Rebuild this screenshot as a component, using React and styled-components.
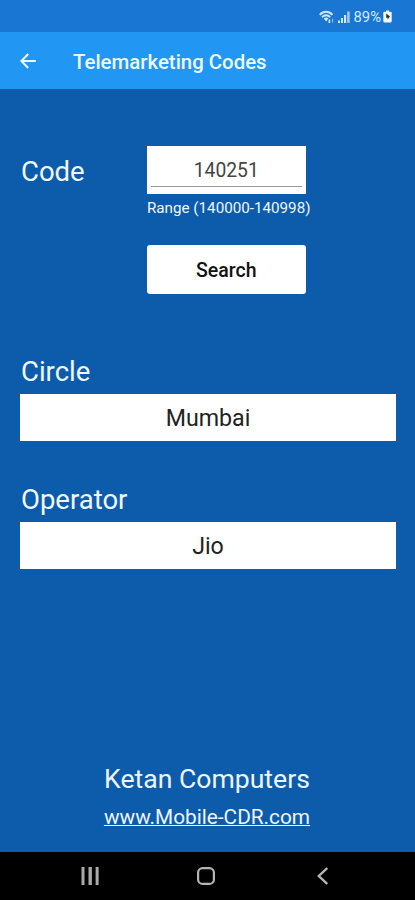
import React from 'react';
import styled, {createGlobalStyle} from 'styled-components';

const App = () => {
  return(
    <Screen>
      <GlobalStyle/>
      <StatusBar>
        <svg width="16" height="14" viewBox="0 0 16 14" fill="none" stroke="#cfe6fb">
          <path d="M0.8 4.8C4.4 0.8 9.8 0.8 13.4 4.8" strokeWidth="2"/>
          <path d="M3 7.2C5.4 4.6 8.8 4.6 11.2 7.2" strokeWidth="1.8"/>
          <path d="M4.8 8.6C6.2 7.2 8 7.2 9.4 8.6L7.1 11.4Z" fill="#cfe6fb" stroke="none"/>
          <path d="M10.4 9.5v3.5" strokeWidth="1.8"/>
          <path d="M13.6 8.5v4" strokeWidth="1.2" opacity="0.6"/>
        </svg>
        <svg width="12" height="12" viewBox="0 0 12 12" fill="#cfe6fb">
          <rect x="0" y="9.5" width="2" height="2.5"/>
          <rect x="3" y="7" width="2" height="5"/>
          <rect x="6" y="4" width="2.2" height="8"/>
          <rect x="9.2" y="0.5" width="2.5" height="11.5" opacity="0.75"/>
        </svg>
        <Percent>89%</Percent>
        <svg width="9" height="13" viewBox="0 0 9 13">
          <path d="M3 0.5h3v1.3h1.5q1.2 0 1.2 1.2v8q0 1.5-1.2 1.5h-6Q0.3 12.5 0.3 11V3q0-1.2 1.2-1.2H3Z" fill="#f2f8f5"/>
          <path d="M3.2 3.5v4.2h1.4v1.8L7 6.4Z" fill="#1d3345"/>
        </svg>
      </StatusBar>
      <AppBar>
        <svg width="16" height="16" viewBox="0 0 16 16" fill="none" stroke="#edf9ff" strokeWidth="2">
          <path d="M15.8 8H1.6M8.2 1 1.4 8l6.8 7"/>
        </svg>
        <Title>Telemarketing Codes</Title>
      </AppBar>
      <Content>
        <CodeRow>
          <CodeLabel htmlFor="code">Code</CodeLabel>
          <CodeColumn>
            <InputBox>
              <CodeInput id="code" defaultValue="140251"/>
            </InputBox>
            <Hint>Range (140000-140998)</Hint>
            <SearchButton>Search</SearchButton>
          </CodeColumn>
        </CodeRow>
        <Field>
          <Label>Circle</Label>
          <Value>Mumbai</Value>
        </Field>
        <Field>
          <Label>Operator</Label>
          <Value>Jio</Value>
        </Field>
        <Footer>
          <Company>Ketan Computers</Company>
          <SiteLink href="#">www.Mobile-CDR.com</SiteLink>
        </Footer>
      </Content>
      <NavBar>
        <svg width="18" height="18" viewBox="0 0 18 18" fill="#a9a9a9">
          <rect x="0.5" y="0" width="3" height="18"/>
          <rect x="7.5" y="0" width="3.4" height="18"/>
          <rect x="14.6" y="0" width="3" height="18"/>
        </svg>
        <svg width="18" height="18" viewBox="0 0 18 18" fill="none" stroke="#b4b4b4" strokeWidth="2.2">
          <rect x="1.1" y="1.1" width="15.8" height="15.8" rx="4.5"/>
        </svg>
        <svg width="11" height="18" viewBox="0 0 11 18" fill="none" stroke="#b4b4b4" strokeWidth="2.4">
          <path d="M10.2 1 1.8 9l8.4 8"/>
        </svg>
      </NavBar>
    </Screen>
  );
}

const GlobalStyle = createGlobalStyle`
  *{
    box-sizing:border-box;
  }
  body{
    margin:0;
    background:#0d5bab;
    font-family:Roboto, sans-serif;
  }
`;

const Screen = styled.div`
  display:flex;
  flex-direction:column;
  width:415px;
  height:900px;
  overflow:hidden;
  background:#0d5bab;
`;

const StatusBar = styled.header`
  display:flex;
  align-items:center;
  justify-content:flex-end;
  height:32px;
  padding:1px 23px 0 0;
  background:#1976d2;
  gap:3px;
`;

const Percent = styled.span`
  margin-left:1px;
  margin-right:-1px;
  color:#d6eafc;
  font-size:14.8px;
  line-height:16px;
`;

const AppBar = styled.nav`
  display:flex;
  align-items:center;
  height:57px;
  padding-left:20px;
  background:#2196f3;
`;

const Title = styled.h1`
  margin:2px 0 0 37px;
  color:#edf9ff;
  font-size:20.4px;
  font-weight:500;
  line-height:24px;
`;

const Content = styled.main`
  display:flex;
  flex-direction:column;
  flex:1;
  padding:57px 19px 22px 20px;
`;

const CodeRow = styled.div`
  display:flex;
  height:207px;
`;

const CodeLabel = styled.label`
  width:127px;
  padding:10px 0 0 1px;
  color:#f0f8ff;
  font-size:27.5px;
  line-height:32px;
`;

const CodeColumn = styled.div`
  display:flex;
  flex-direction:column;
  align-items:flex-start;
`;

const InputBox = styled.div`
  width:158.5px;
  height:48px;
  padding:4px;
  background:#fff;
`;

const CodeInput = styled.input`
  display:block;
  width:100%;
  height:37px;
  padding:5px 0 0;
  border:0;
  border-bottom:1px solid #9a9a9a;
  outline:0;
  background:transparent;
  color:#444;
  font-family:inherit;
  font-size:19.3px;
  text-align:center;
`;

const Hint = styled.span`
  height:51px;
  padding-top:5px;
  color:#edf6ff;
  font-size:15.2px;
  line-height:18px;
  white-space:nowrap;
`;

const SearchButton = styled.button`
  width:158.5px;
  height:49px;
  padding:2px 0 0;
  border:0;
  border-radius:3px;
  background:#fff;
  color:#111;
  font-family:inherit;
  font-size:19.5px;
  font-weight:500;
`;

const Field = styled.section`
  margin-bottom:40px;
`;

const Label = styled.div`
  height:41px;
  padding:3px 0 0 1px;
  color:#f0f8ff;
  font-size:27.5px;
  line-height:32px;
`;

const Value = styled.div`
  height:47px;
  padding-top:1px;
  background:#fff;
  color:#222;
  font-size:23.2px;
  line-height:46px;
  text-align:center;
`;

const Footer = styled.footer`
  display:flex;
  flex-direction:column;
  align-items:center;
  margin-top:auto;
  padding-right:2px;
`;

const Company = styled.div`
  color:#edf6ff;
  font-size:26.6px;
  line-height:32px;
`;

const SiteLink = styled.a`
  margin-top:9px;
  color:#edf6ff;
  font-size:20.8px;
  line-height:26px;
  text-decoration-thickness:1px;
`;

const NavBar = styled.nav`
  display:flex;
  align-items:center;
  justify-content:space-between;
  height:48px;
  padding:0 87px 0 81px;
  background:#000;

  svg:nth-child(2){
    margin-right:4px;
  }
`;

export default App;
